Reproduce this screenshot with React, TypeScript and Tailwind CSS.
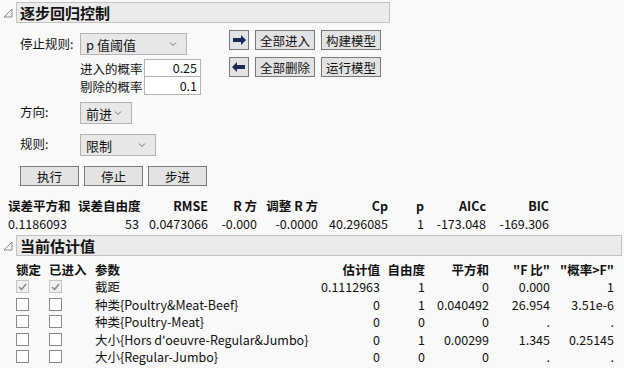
import React from "react";

const font = { fontFamily: '"Noto Sans CJK SC", "Noto Sans", sans-serif' };

const Disclosure = () => (
  <svg width="10" height="10" viewBox="0 0 10 10" className="shrink-0">
    <path d="M9 1 L9 9 L1 9 Z" fill="none" stroke="#8a8a8a" strokeWidth="1" />
  </svg>
);

const Chevron = () => (
  <svg width="8" height="6" viewBox="0 0 8 6">
    <path d="M1 1.5 L4 4.5 L7 1.5" fill="none" stroke="#707070" strokeWidth="1" />
  </svg>
);

const Select = ({ label, w }: { label: string; w: string }) => (
  <div className={`${w} h-[22px] flex items-center justify-between pl-[5px] pr-[9px] bg-[#e8e8e8] border border-[#b4b4b4] text-[13px] text-[#111]`}>
    <span>{label}</span>
    <Chevron />
  </div>
);

const Btn = ({ children, w }: { children: React.ReactNode; w: string }) => (
  <div className={`${w} h-[20px] flex items-center justify-center bg-[#e3e3e3] border border-[#7a7a7a] text-[12.5px] text-[#111]`}>
    {children}
  </div>
);

const Arrow = ({ left }: { left?: boolean }) => (
  <div className="w-[20px] h-[20px] flex items-center justify-center bg-[#e3e3e3] border border-[#7a7a7a]">
    <svg width="14" height="10" viewBox="0 0 14 10">
      {left ? (
        <path d="M0 5 L5 0 L5 3 L13 3 L13 7 L5 7 L5 10 Z" fill="#1b2a55" />
      ) : (
        <path d="M14 5 L9 0 L9 3 L1 3 L1 7 L9 7 L9 10 Z" fill="#1b2a55" />
      )}
    </svg>
  </div>
);

const Check = ({ on }: { on?: boolean }) =>
  on ? (
    <div className="w-[13px] h-[13px] border border-[#c4c4c4] bg-[#f0f0f0] flex items-center justify-center">
      <svg width="9" height="8" viewBox="0 0 9 8">
        <path d="M1 4 L3.5 6.5 L8 1" fill="none" stroke="#8c8c8c" strokeWidth="1.6" />
      </svg>
    </div>
  ) : (
    <div className="w-[13px] h-[13px] border border-[#8a8a8a] bg-white" />
  );

const statCols = "grid grid-cols-[70px_61px_69px_49px_61px_70px_36px_62px_63px]";
const stats = [
  ["误差平方和", "0.1186093"],
  ["误差自由度", "53"],
  ["RMSE", "0.0473066"],
  ["R 方", "-0.000"],
  ["调整 R 方", "-0.0000"],
  ["Cp", "40.296085"],
  ["p", "1"],
  ["AICc", "-173.048"],
  ["BIC", "-169.306"],
];

const rows = [
  { lock: true, name: "截距", est: "0.1112963", df: "1", ss: "0", f: "0.000", p: "1" },
  { name: "种类{Poultry&Meat-Beef}", est: "0", df: "1", ss: "0.040492", f: "26.954", p: "3.51e-6" },
  { name: "种类{Poultry-Meat}", est: "0", df: "0", ss: "0", f: ".", p: "." },
  { name: "大小{Hors d'oeuvre-Regular&Jumbo}", est: "0", df: "1", ss: "0.00299", f: "1.345", p: "0.25145" },
  { name: "大小{Regular-Jumbo}", est: "0", df: "0", ss: "0", f: ".", p: "." },
];

const tblCols = "grid grid-cols-[33px_46px_191px_94px_45px_64px_61px_64px]";

export default function App() {
  return (
    <div style={font} className="w-[624px] h-[368px] bg-[#f9f9f9] text-[#111] text-[12.5px] leading-[17px] overflow-hidden pt-[2px] whitespace-nowrap">
      {/* stepwise control */}
      <div className="flex items-center gap-[3px] pl-[3px]">
        <Disclosure />
        <div className="w-[374px] h-[21px] bg-[#ebebeb] border border-[#c2c2c2] flex items-center pl-[3px] text-[15px] font-bold">
          逐步回归控制
        </div>
      </div>

      <div className="flex pl-[20px] pt-[10px]">
        <div className="flex flex-col w-[187px]">
          <div className="flex">
            <div className="w-[60px] pt-[2px]">停止规则:</div>
            <div className="flex flex-col">
              <Select label="p 值阈值" w="w-[107px]" />
              <div className="flex flex-col mt-[4px]">
                <div className="flex items-center h-[18px]">
                  <span className="w-[64px]">进入的概率</span>
                  <div className="w-[57px] h-[18px] bg-white border border-[#b4b4b4] flex items-center justify-end pr-[3px] leading-[14px]">0.25</div>
                </div>
                <div className="flex items-center h-[18px]">
                  <span className="w-[64px]">剔除的概率</span>
                  <div className="w-[57px] h-[18px] bg-white border border-t-0 border-[#b4b4b4] flex items-center justify-end pr-[3px] leading-[14px]">0.1</div>
                </div>
              </div>
            </div>
          </div>
          <div className="flex items-center mt-[7px]">
            <div className="w-[60px] -mt-[4px]">方向:</div>
            <Select label="前进" w="w-[52px]" />
          </div>
          <div className="flex items-center mt-[10px]">
            <div className="w-[60px] -mt-[4px]">规则:</div>
            <Select label="限制" w="w-[76px]" />
          </div>
          <div className="flex gap-[5px] mt-[10px]">
            <Btn w="w-[59px]">执行</Btn>
            <Btn w="w-[59px]">停止</Btn>
            <Btn w="w-[59px]">步进</Btn>
          </div>
        </div>
        <div className="flex flex-col gap-[7px] ml-[22px] -mt-[3px]">
          <div className="flex gap-[6px]">
            <Arrow />
            <Btn w="w-[60px]">全部进入</Btn>
            <Btn w="w-[60px]">构建模型</Btn>
          </div>
          <div className="flex gap-[6px]">
            <Arrow left />
            <Btn w="w-[60px]">全部删除</Btn>
            <Btn w="w-[60px]">运行模型</Btn>
          </div>
        </div>
      </div>

      {/* stats */}
      <div className={`${statCols} pl-[8px] mt-[11px]`}>
        {stats.map(([h], i) => (
          <div key={h} className={`font-bold ${i === 0 ? "text-left" : "text-right"}`}>{h}</div>
        ))}
        {stats.map(([h, v], i) => (
          <div key={h + "v"} className={`pt-px ${i === 0 ? "text-left" : "text-right"}`}>{v}</div>
        ))}
      </div>

      {/* current estimates */}
      <div className="flex items-center gap-[3px] pl-[3px] mt-[3px]">
        <Disclosure />
        <div className="w-[606px] h-[21px] bg-[#ebebeb] border border-[#c2c2c2] flex items-center pl-[3px] text-[15px] font-bold">
          当前估计值
        </div>
      </div>

      <div className="pl-[16px] mt-[5px]">
        <div className={`${tblCols} font-bold`}>
          <div>锁定</div>
          <div>已进入</div>
          <div>参数</div>
          <div className="text-right">估计值</div>
          <div className="text-right">自由度</div>
          <div className="text-right">平方和</div>
          <div className="text-right">"F 比"</div>
          <div className="text-right">"概率&gt;F"</div>
        </div>
        {rows.map((r) => (
          <div key={r.name} className={`${tblCols} h-[17.5px] items-center`}>
            <Check on={r.lock} />
            <Check on={r.lock} />
            <div>{r.name}</div>
            <div className="text-right">{r.est}</div>
            <div className="text-right">{r.df}</div>
            <div className="text-right">{r.ss}</div>
            <div className="text-right">{r.f}</div>
            <div className="text-right">{r.p}</div>
          </div>
        ))}
      </div>
    </div>
  );
}
